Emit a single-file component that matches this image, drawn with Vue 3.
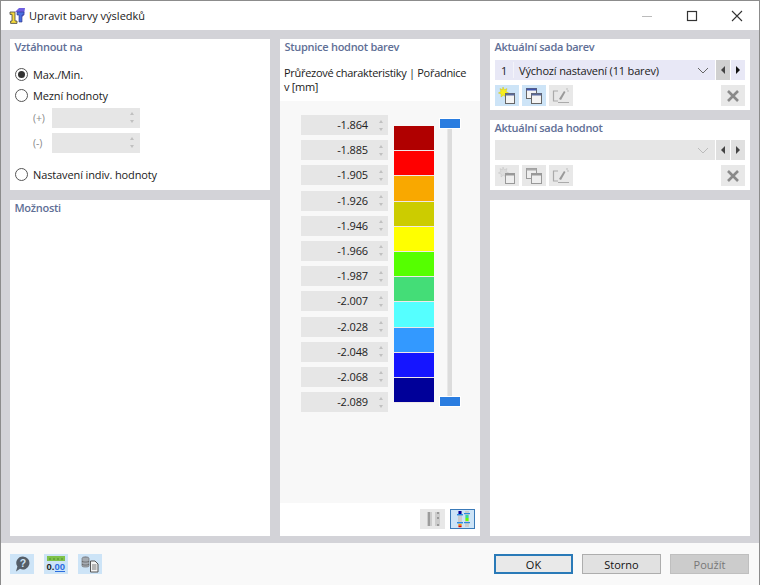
<script setup>
const rows = ['-1.864','-1.885','-1.905','-1.926','-1.946','-1.966','-1.987','-2.007','-2.028','-2.048','-2.068','-2.089']
const colors = ['#b00000','#ff0000','#f9a800','#cccc00','#ffff00','#55ff00','#44dd77','#55ffff','#3399ff','#1515ff','#000099']
</script>

<template>
  <div class="win">
    <header class="title">
      <svg class="logo" width="16" height="16" viewBox="0 0 16 16">
        <path d="M6 4 L10 0 H16 L15 7 L13 9 V4Z" fill="#6f5fe0"/>
        <path d="M8 4 H15 V7 H13 V14 H10 V7 H8Z" fill="#4a6fe0" stroke="#2c2f80" stroke-width=".6"/>
        <path d="M1 4 H6 V13 H8 V15.4 H1.6 V13 H3 V6.4 H1Z" fill="#f6d93a" stroke="#444" stroke-width=".8"/>
      </svg>
      <span class="title-text">Upravit barvy výsledků</span>
      <div class="win-btns">
        <svg width="12" height="12" viewBox="0 0 12 12"><path d="M1 6.5H11" stroke="#bbb"/></svg>
        <svg width="12" height="12" viewBox="0 0 12 12"><rect x="1.5" y="1.5" width="9" height="9" fill="none" stroke="#333" stroke-width="1.2"/></svg>
        <svg width="12" height="12" viewBox="0 0 12 12"><path d="M1 1L11 11M11 1L1 11" stroke="#333" stroke-width="1.1"/></svg>
      </div>
    </header>

    <main class="body">
      <section class="col col-side">
        <div class="panel p-ref">
          <h3>Vztáhnout na</h3>
          <div class="radios">
            <label class="radio"><span class="dot on"></span>Max./Min.</label>
            <label class="radio"><span class="dot"></span>Mezní hodnoty</label>
            <div class="lim"><span class="sign">(+)</span><div class="spin-off"><span class="arrows"><i class="up"></i><i class="down"></i></span></div></div>
            <div class="lim second"><span class="sign">(-)</span><div class="spin-off"><span class="arrows"><i class="up"></i><i class="down"></i></span></div></div>
            <label class="radio last"><span class="dot"></span>Nastavení indiv. hodnoty</label>
          </div>
        </div>
        <div class="panel grow"><h3>Možnosti</h3></div>
      </section>

      <section class="panel col-mid">
        <h3>Stupnice hodnot barev</h3>
        <p class="sub">Průřezové charakteristiky | Pořadnice v [mm]</p>
        <div class="scale">
          <div class="values">
            <div v-for="r in rows" :key="r" class="val">
              <span>{{ r }}</span>
              <span class="arrows"><i class="up"></i><i class="down"></i></span>
            </div>
          </div>
          <div class="bars">
            <div v-for="c in colors" :key="c" class="bar" :style="{ background: c }"></div>
          </div>
          <div class="slider">
            <div class="track"></div>
            <div class="handle top"></div>
            <div class="handle bottom"></div>
          </div>
        </div>
        <div class="mid-foot">
          <button class="ib off wide">
            <svg width="18" height="18" viewBox="0 0 18 18"><rect x="3" y="2" width="5" height="14" fill="#ccc"/><rect x="11" y="2" width="5" height="14" fill="#ccc"/><path d="M5 2V16M13 3H15M13 8H15M13 15H15" stroke="#888" stroke-width="1.4"/></svg>
          </button>
          <button class="ib sel wide">
            <svg width="18" height="18" viewBox="0 0 18 18">
              <rect x="4" y="1" width="4" height="16" fill="#ccc"/><rect x="11" y="1" width="4" height="16" fill="#ccc"/>
              <rect x="4.5" y="1" width="3" height="3" fill="#0000a0"/><rect x="3" y="4" width="6" height="1.4" fill="#2a8ae0"/>
              <rect x="3" y="12" width="6" height="1.4" fill="#2a8ae0"/><rect x="4.5" y="14" width="3" height="1.6" fill="#f9a800"/><rect x="4.5" y="15.6" width="3" height="1.6" fill="#d00"/>
              <rect x="10" y="3" width="6" height="1.2" fill="#2a8ae0"/><rect x="11.5" y="5" width="3" height="3" fill="#33dd99"/><rect x="11.5" y="8" width="3" height="3" fill="#66ff00"/><rect x="10" y="12" width="6" height="1.2" fill="#2a8ae0"/>
            </svg>
          </button>
        </div>
      </section>

      <section class="col col-side">
        <div class="panel p-set">
          <h3>Aktuální sada barev</h3>
          <div class="combo-row">
            <div class="combo active">
              <span class="num">1</span><span class="sep"></span><span class="name">Výchozí nastavení (11 barev)</span>
              <svg class="chev" width="12" height="7" viewBox="0 0 12 7"><path d="M1 1L6 6L11 1" fill="none" stroke="#666"/></svg>
            </div>
            <button class="nav prev pressed"><i class="tl"></i></button>
            <button class="nav active-nav"><i class="tr dark"></i></button>
          </div>
          <div class="tools">
            <button class="ib on">
              <svg width="18" height="18" viewBox="0 0 18 18"><path d="M5 0L6.2 2.8L9 1.6L8 4.6L10.6 6L7.6 7L8 10L5.4 8.2L3 10L3.2 7L0.4 6L3 4.4L2 1.6L4.4 2.8Z" fill="#f7ee20" stroke="#c8b800" stroke-width=".4"/><rect x="7.5" y="6.5" width="9" height="10" fill="#f4f4f4" stroke="#666"/><rect x="7.5" y="6.5" width="9" height="2" fill="#5a6a9a"/></svg>
            </button>
            <button class="ib on">
              <svg width="18" height="18" viewBox="0 0 18 18"><rect x="1.5" y="1.5" width="10" height="10" fill="#f4f4f4" stroke="#666"/><rect x="1.5" y="1.5" width="10" height="2" fill="#3f55b0"/><rect x="6.5" y="6.5" width="10" height="10" fill="#f4f4f4" stroke="#666"/><rect x="6.5" y="6.5" width="10" height="2" fill="#5a6a9a"/></svg>
            </button>
            <button class="ib off">
              <svg width="18" height="18" viewBox="0 0 18 18"><path d="M6 4H1.5V14H6M6 15.5H17" fill="none" stroke="#aaa" stroke-width="1.2"/><path d="M7 12L12 4L13.5 5L9 13Z" fill="#999"/><path d="M14 2H16M15 4H17" stroke="#bbb"/></svg>
            </button>
            <button class="ib off del">
              <svg width="14" height="14" viewBox="0 0 14 14"><path d="M2 2L12 12M12 2L2 12" stroke="#8a8a8a" stroke-width="2.6"/></svg>
            </button>
          </div>
        </div>
        <div class="panel p-set second-set">
          <h3>Aktuální sada hodnot</h3>
          <div class="combo-row">
            <div class="combo">
              <svg class="chev" width="12" height="7" viewBox="0 0 12 7"><path d="M1 1L6 6L11 1" fill="none" stroke="#bbb"/></svg>
            </div>
            <button class="nav"><i class="tl"></i></button>
            <button class="nav"><i class="tr"></i></button>
          </div>
          <div class="tools">
            <button class="ib off">
              <svg width="18" height="18" viewBox="0 0 18 18"><path d="M5 0L6.2 2.8L9 1.6L8 4.6L10.6 6L7.6 7L8 10L5.4 8.2L3 10L3.2 7L0.4 6L3 4.4L2 1.6L4.4 2.8Z" fill="#ddd" stroke="#bbb" stroke-width=".4"/><rect x="7.5" y="6.5" width="9" height="10" fill="#eee" stroke="#999"/><rect x="7.5" y="6.5" width="9" height="2" fill="#999"/></svg>
            </button>
            <button class="ib off">
              <svg width="18" height="18" viewBox="0 0 18 18"><rect x="1.5" y="1.5" width="10" height="10" fill="#eee" stroke="#999"/><rect x="1.5" y="1.5" width="10" height="2" fill="#aaa"/><rect x="6.5" y="6.5" width="10" height="10" fill="#eee" stroke="#999"/><rect x="6.5" y="6.5" width="10" height="2" fill="#999"/></svg>
            </button>
            <button class="ib off">
              <svg width="18" height="18" viewBox="0 0 18 18"><path d="M6 4H1.5V14H6M6 15.5H17" fill="none" stroke="#aaa" stroke-width="1.2"/><path d="M7 12L12 4L13.5 5L9 13Z" fill="#999"/><path d="M14 2H16M15 4H17" stroke="#bbb"/></svg>
            </button>
            <button class="ib off del">
              <svg width="14" height="14" viewBox="0 0 14 14"><path d="M2 2L12 12M12 2L2 12" stroke="#8a8a8a" stroke-width="2.6"/></svg>
            </button>
          </div>
        </div>
        <div class="panel grow"></div>
      </section>
    </main>

    <footer class="foot">
      <div class="foot-icons">
        <button class="ib on">
          <svg width="18" height="18" viewBox="0 0 18 18"><path d="M10 1.5A6.5 6.5 0 1 1 7 13.8L3 16.5L4.4 11.6A6.5 6.5 0 0 1 10 1.5Z" fill="#555e68"/><text x="10" y="12.4" class="q">?</text></svg>
        </button>
        <button class="ib on">
          <svg width="20" height="18" viewBox="0 0 20 18"><rect x="1" y="1" width="18" height="5" fill="#7fc24a"/><path d="M4 3V5M8 3V5M12 3V5M16 3V5" stroke="#4f8f2a"/><rect x="9" y="16" width="10" height="1" fill="#2a6de0"/><text x="0.5" y="15" class="n">0.</text><text x="8.5" y="15" class="n blue">00</text></svg>
        </button>
        <button class="ib on">
          <svg width="20" height="18" viewBox="0 0 20 18"><ellipse cx="5.5" cy="3" rx="3.5" ry="1.8" fill="#8a9098"/><path d="M2 3V11C2 12.4 9 12.4 9 11V3" fill="#a5abb2" stroke="#666" stroke-width=".6"/><path d="M2 6C2 7.4 9 7.4 9 6M2 9C2 10.4 9 10.4 9 9" fill="none" stroke="#555" stroke-width=".7"/><path d="M10.5 6H15L18 9V17H10.5Z" fill="#f4f4f4" stroke="#555"/><path d="M12 10H16.5M12 12H16.5M12 14H16.5" stroke="#777"/></svg>
        </button>
      </div>
      <div class="foot-btns">
        <button class="btn primary">OK</button>
        <button class="btn">Storno</button>
        <button class="btn disabled">Použít</button>
      </div>
    </footer>
  </div>
</template>

<style scoped>
.win {
  width: 760px;
  height: 585px;
  box-sizing: border-box;
  display: flex;
  flex-direction: column;
  background: #d3d3d8;
  border: 1px solid #8c8c8c;
  border-bottom: 0;
  font-family: "Open Sans", "Noto Sans", sans-serif;
  font-size: 11px;
  letter-spacing: -0.12px;
  color: #1a1a1a;
  overflow: hidden;
}
.title {
  height: 29px;
  flex: none;
  background: #fff;
  display: flex;
  align-items: center;
  padding-left: 8px;
}
.logo { margin-right: 4px; }
.title-text { font-size: 11px; letter-spacing: 0; }
.win-btns {
  margin-left: auto;
  display: flex;
  gap: 33px;
  padding-right: 16px;
}
.body {
  flex: 1;
  min-height: 0;
  display: flex;
  gap: 10px;
  padding: 9px 9px 7px;
}
.col { display: flex; flex-direction: column; gap: 10px; }
.col-side { width: 260px; flex: none; }
.panel { background: #fff; box-sizing: border-box; }
.grow { flex: 1; }
h3 {
  margin: 0;
  padding: 0 4.5px;
  font-size: 11px;
  line-height: 15px;
  font-weight: 600;
  letter-spacing: -0.28px;
  color: #5f6f96;
}
.p-ref { height: 151px; flex: none; }
.radios { padding: 10px 5px 0; }
.radio {
  display: flex;
  align-items: center;
  gap: 5px;
  height: 21px;
}
.radio.last { margin-top: 11px; }
.dot {
  width: 11px;
  height: 11px;
  border: 1px solid #555;
  border-radius: 50%;
  background: #fff;
  position: relative;
  flex: none;
}
.dot.on::after {
  content: "";
  position: absolute;
  left: 2px;
  top: 2px;
  width: 7px;
  height: 7px;
  border-radius: 50%;
  background: #333;
}
.lim {
  display: flex;
  align-items: center;
  height: 20px;
  margin-top: 2px;
  padding-left: 18px;
}
.lim.second { margin-top: 5px; }
.sign { width: 19px; color: #8a8a8a; font-size: 10.5px; }
.spin-off {
  width: 88px;
  height: 20px;
  background: #e6e6e6;
  position: relative;
}
.arrows {
  display: inline-flex;
  flex-direction: column;
  gap: 5px;
  align-items: center;
}
.spin-off .arrows { position: absolute; right: 6px; top: 4px; }
.up, .down { display: block; width: 0; height: 0; border-left: 2.5px solid transparent; border-right: 2.5px solid transparent; }
.up { border-bottom: 3px solid #c0c0c0; }
.down { border-top: 3px solid #c0c0c0; }

.col-mid {
  width: 200px;
  flex: none;
  display: flex;
  flex-direction: column;
}
.sub {
  margin: 12px 0 0;
  padding: 0 12px 0 4px;
  font-size: 11px;
  line-height: 14px;
  letter-spacing: -0.3px;
  height: 28px;
  flex: none;
}
.scale {
  margin-top: 7px;
  height: 402px;
  flex: none;
  background: #f8f8f8;
  display: flex;
  padding: 13px 0 0 21px;
  box-sizing: border-box;
}
.values { width: 87px; flex: none; display: flex; flex-direction: column; gap: 5.2px; margin-top: 1px; }
.val {
  height: 20px;
  background: #e6e6e6;
  display: flex;
  align-items: center;
  justify-content: flex-end;
  padding-right: 5px;
  gap: 11px;
  font-size: 11px;
  line-height: 18px;
  color: #222;
}
.bars {
  margin: 12px 0 0 6px;
  width: 40px;
  height: 277px;
  flex: none;
  display: flex;
  flex-direction: column;
}
.bar { flex: 1; border-bottom: 1px solid #f0e8e8; box-sizing: border-box; }
.slider { position: relative; width: 22px; margin-left: 5px; height: 292px; margin-top: 4px; }
.track { position: absolute; left: 8px; width: 5px; top: 2px; bottom: 4px; background: #dcdcdc; border-left: 1px solid #e8e8e8; box-sizing: border-box; }
.handle { position: absolute; left: 0; width: 22px; height: 11px; background: #2a7de0; border: 1px solid #fff; box-sizing: border-box; }
.handle.top { top: 0; }
.handle.bottom { top: 278px; }
.mid-foot {
  display: flex;
  justify-content: flex-end;
  gap: 5px;
  padding: 6px 5px 0;
}
.ib {
  width: 24px;
  height: 20px;
  padding: 0;
  border: 0;
  display: flex;
  align-items: center;
  justify-content: center;
  background: #e8e8e8;
}
.ib.wide { width: 25px; }
.ib.on { background: #cde4f7; }
.ib.sel { background: #cde4f7; border: 1px solid #3a7ab8; box-sizing: border-box; }
.p-set { height: 71px; flex: none; }
.p-set.second-set { height: 70px; }
.combo-row { display: flex; margin: 6px 5px 0; gap: 1px; height: 20px; }
.second-set .combo-row { margin-top: 5px; }
.combo {
  flex: 1;
  background: #e6e6e6;
  display: flex;
  align-items: center;
  position: relative;
}
.combo.active { background: #e8e8f6; }
.num { width: 18px; text-align: center; }
.sep { width: 1px; height: 16px; background: #f4f4fa; margin-right: 5px; }
.name { font-size: 11px; letter-spacing: -0.17px; }
.chev { position: absolute; right: 6px; top: 7px; }
.nav {
  width: 14px;
  padding: 0;
  border: 0;
  background: #e0e0e0;
  display: flex;
  align-items: center;
  justify-content: center;
}
.nav.pressed { background: #d0d0d0; }
.nav.active-nav { background: #e8e8f6; }
.tl, .tr { display: block; width: 0; height: 0; border-top: 4px solid transparent; border-bottom: 4px solid transparent; }
.tl { border-right: 4px solid #444; }
.tr { border-left: 4px solid #444; }
.tr.dark { border-left-color: #111; }
.tools { display: flex; gap: 3px; margin: 5px 5px 0; }
.tools .ib { height: 21px; }
.del { margin-left: auto; }
.foot {
  height: 42px;
  flex: none;
  background: #f9f9f9;
  display: flex;
  align-items: center;
  justify-content: space-between;
  padding: 0 10px 0 9px;
}
.foot-icons { display: flex; gap: 10px; }
.foot-btns { display: flex; gap: 9px; }
.btn {
  width: 79px;
  height: 20px;
  box-sizing: border-box;
  padding: 0;
  background: #e1e1e1;
  border: 1px solid #adadad;
  font: inherit;
  font-size: 11px;
  color: #111;
}
.btn.primary { border: 2px solid #2a7ab8; background: #e9e9e9; }
.btn.disabled { background: #ccc; border-color: #bfbfbf; color: #777; }
.q { font: 700 10.5px "Liberation Sans", sans-serif; fill: #cde4f7; text-anchor: middle; }
.n { font: 700 9.5px "Liberation Sans", sans-serif; fill: #222; }
.n.blue { fill: #2a6de0; }
</style>

<style>
html, body { margin: 0; background: #fff; }
</style>
